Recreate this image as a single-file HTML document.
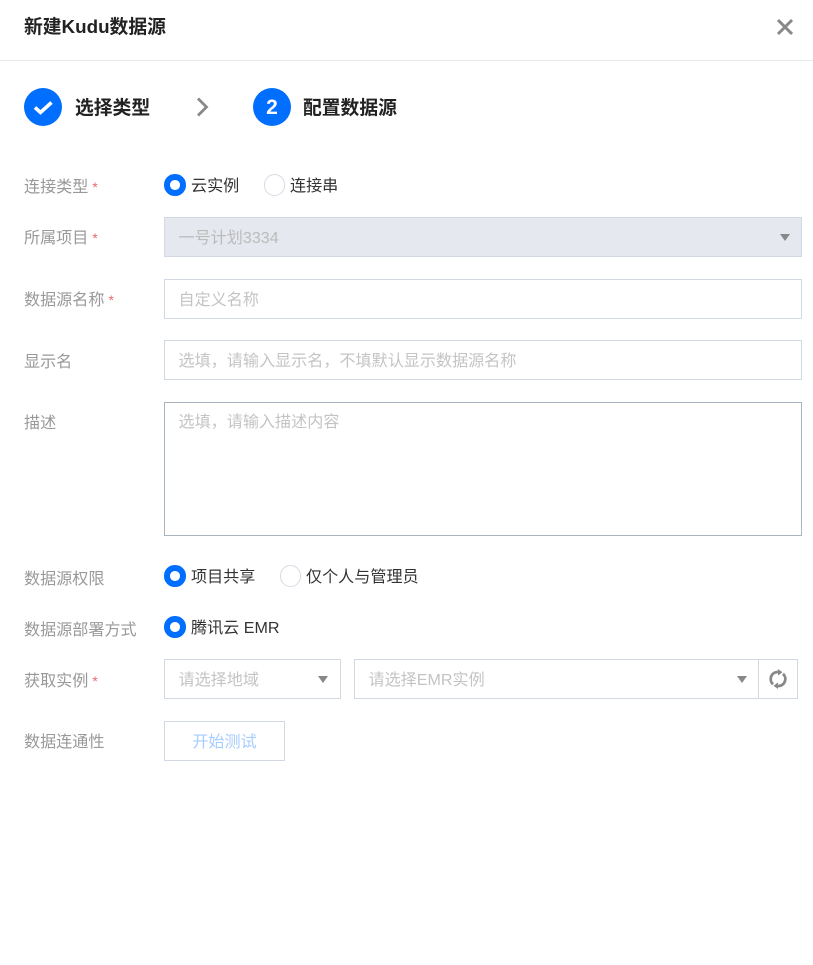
<!DOCTYPE html>
<html lang="zh">
<head>
<meta charset="utf-8">
<style>
html,body{margin:0;padding:0;background:#fff;}
body{width:813px;height:965px;position:relative;overflow:hidden;font-family:"Liberation Sans","Noto Sans CJK SC",sans-serif;font-size:16.1px;color:#333;}
.a{position:absolute;white-space:nowrap;line-height:24px;}
.l{left:24px;color:#999;}
.star{color:#ea6a6a;font-size:14px;margin-left:4px;}
.box{position:absolute;box-sizing:border-box;border:1px solid #d3d9e2;background:#fff;}
.ph{color:#c4c4c4;}
.r{position:absolute;box-sizing:border-box;width:21.5px;height:21.5px;border-radius:50%;}
.on{border:6px solid #006eff;background:#fff;}
.off{border:1px solid #d5dbe5;background:#fff;}
.tri{position:absolute;width:0;height:0;border-left:5.5px solid transparent;border-right:5.5px solid transparent;border-top:7px solid #888;}
.t{font-size:18.8px;font-weight:700;color:#222;}
</style>
</head>
<body>
<div class="a t" style="left:24px;top:15px;">新建Kudu数据源</div>
<svg style="position:absolute;left:776px;top:18px" width="18" height="18" viewBox="0 0 18 18"><path d="M2 2L16 16M16 2L2 16" stroke="#888" stroke-width="3" fill="none"/></svg>
<div style="position:absolute;left:0;top:60px;width:813px;height:1px;background:#e7eaef;"></div>

<div style="position:absolute;left:24px;top:88px;width:38px;height:38px;border-radius:50%;background:#006eff;"></div>
<svg style="position:absolute;left:24px;top:88px" width="38" height="38" viewBox="0 0 38 38"><path d="M11 19.5L16.5 24.5L27.5 14.5" stroke="#fff" stroke-width="3.6" fill="none"/></svg>
<div class="a t" style="left:75px;top:96px;">选择类型</div>
<svg style="position:absolute;left:194px;top:96px" width="18" height="22" viewBox="0 0 18 22"><path d="M4 2.5L12.5 11L4 19.5" stroke="#888" stroke-width="2.8" fill="none"/></svg>
<div style="position:absolute;left:253px;top:88px;width:38px;height:38px;border-radius:50%;background:#006eff;color:#fff;text-align:center;line-height:39px;font-size:21px;font-weight:700;">2</div>
<div class="a t" style="left:303px;top:96px;">配置数据源</div>

<div class="a l" style="top:175px;">连接类型<span class="star">*</span></div>
<div class="r on" style="left:164px;top:174px;"></div>
<div class="a" style="left:191px;top:174px;">云实例</div>
<div class="r off" style="left:263.5px;top:174px;"></div>
<div class="a" style="left:290px;top:174px;">连接串</div>

<div class="a l" style="top:226px;">所属项目<span class="star">*</span></div>
<div class="box" style="left:164px;top:217px;width:638px;height:40px;background:#e5e8ee;"></div>
<div class="a ph" style="left:178.5px;top:226px;color:#bbb;">一号计划3334</div>
<div class="tri" style="left:780px;top:234px;"></div>

<div class="a l" style="top:288px;">数据源名称<span class="star">*</span></div>
<div class="box" style="left:164px;top:279px;width:638px;height:40px;"></div>
<div class="a ph" style="left:178.5px;top:288px;">自定义名称</div>

<div class="a l" style="top:350px;">显示名</div>
<div class="box" style="left:164px;top:340px;width:638px;height:40px;"></div>
<div class="a ph" style="left:178.5px;top:349px;">选填，请输入显示名，不填默认显示数据源名称</div>

<div class="a l" style="top:411px;">描述</div>
<div class="box" style="left:164px;top:402px;width:638px;height:134px;border-color:#a9b5c0;"></div>
<div class="a ph" style="left:178.5px;top:410px;">选填，请输入描述内容</div>

<div class="a l" style="top:567px;">数据源权限</div>
<div class="r on" style="left:164px;top:565px;"></div>
<div class="a" style="left:191px;top:565px;">项目共享</div>
<div class="r off" style="left:279.5px;top:565px;"></div>
<div class="a" style="left:306px;top:565px;">仅个人与管理员</div>

<div class="a l" style="top:618px;">数据源部署方式</div>
<div class="r on" style="left:164px;top:616px;"></div>
<div class="a" style="left:191px;top:616px;">腾讯云 EMR</div>

<div class="a l" style="top:669px;">获取实例<span class="star">*</span></div>
<div class="box" style="left:164px;top:659px;width:177px;height:40px;"></div>
<div class="a ph" style="left:178.5px;top:668px;">请选择地域</div>
<div class="tri" style="left:318px;top:676px;"></div>
<div class="box" style="left:354px;top:659px;width:405px;height:40px;"></div>
<div class="a ph" style="left:368.5px;top:668px;">请选择EMR实例</div>
<div class="tri" style="left:737px;top:676px;"></div>
<div class="box" style="left:758px;top:659px;width:40px;height:40px;"></div>
<svg style="position:absolute;left:768px;top:669px" width="20" height="20" viewBox="0 0 20 20"><path d="M5 15.2A7 7 0 0 1 10 3M15 4.8A7 7 0 0 1 10 17" stroke="#888" stroke-width="2.8" fill="none"/><path d="M10 0L14.5 3.2L10 6.5ZM10 13.5L5.5 16.8L10 20Z" fill="#888"/></svg>

<div class="a l" style="top:730px;">数据连通性</div>
<div class="box" style="left:164px;top:721px;width:121px;height:40px;"></div>
<div class="a" style="left:164px;top:730px;width:121px;text-align:center;color:#a6cdff;">开始测试</div>
</body>
</html>
